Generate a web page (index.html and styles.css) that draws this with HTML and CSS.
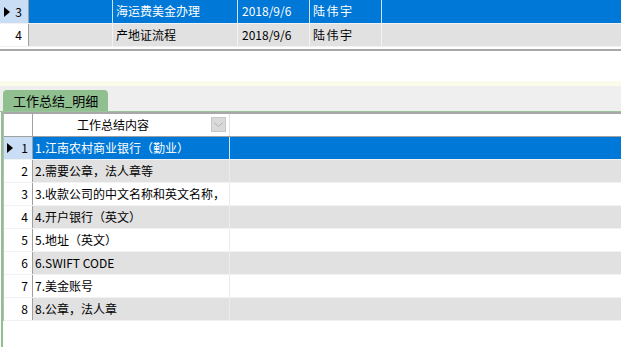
FILE: index.html
```html
<!DOCTYPE html>
<html>
<head>
<meta charset="utf-8">
<link rel="stylesheet" href="styles.css">
</head>
<body>
<div class="top-grid">
  <div class="row sel">
    <div class="rh"><span class="arrow"></span><span>3</span></div>
    <div class="c c1"></div>
    <div class="c c2">海运费美金办理</div>
    <div class="c c3">2018/9/6</div>
    <div class="c c4">陆伟宇</div>
    <div class="c rest"></div>
  </div>
  <div class="row alt">
    <div class="rh"><span>4</span></div>
    <div class="c c1"></div>
    <div class="c c2">产地证流程</div>
    <div class="c c3">2018/9/6</div>
    <div class="c c4">陆伟宇</div>
    <div class="c rest"></div>
  </div>
</div>
<div class="gap"></div>
<div class="band"></div>
<div class="tabs">
  <div class="tab">工作总结_明细</div>
</div>
<div class="panel">
  <div class="grid">
    <div class="hrow">
      <div class="hrh"></div>
      <div class="hc">
        <span class="htext">工作总结内容</span>
        <span class="dd"><svg width="11" height="7" viewBox="0 0 11 7"><path d="M1 1.5 L5.5 5.5 L10 1.5" fill="none" stroke="#b4b4b4" stroke-width="1"/></svg></span>
      </div>
      <div class="hrest"></div>
    </div>
    <div class="brow sel">
      <div class="brh"><span class="arrow"></span><span>1</span></div>
      <div class="bc">1.江南农村商业银行（勤业）</div>
      <div class="bc rest"></div>
    </div>
    <div class="brow alt">
      <div class="brh"><span>2</span></div>
      <div class="bc">2.需要公章，法人章等</div>
      <div class="bc rest"></div>
    </div>
    <div class="brow">
      <div class="brh"><span>3</span></div>
      <div class="bc">3.收款公司的中文名称和英文名称，</div>
      <div class="bc rest"></div>
    </div>
    <div class="brow alt">
      <div class="brh"><span>4</span></div>
      <div class="bc">4.开户银行（英文）</div>
      <div class="bc rest"></div>
    </div>
    <div class="brow">
      <div class="brh"><span>5</span></div>
      <div class="bc">5.地址（英文）</div>
      <div class="bc rest"></div>
    </div>
    <div class="brow alt">
      <div class="brh"><span>6</span></div>
      <div class="bc">6.SWIFT CODE</div>
      <div class="bc rest"></div>
    </div>
    <div class="brow">
      <div class="brh"><span>7</span></div>
      <div class="bc">7.美金账号</div>
      <div class="bc rest"></div>
    </div>
    <div class="brow alt">
      <div class="brh"><span>8</span></div>
      <div class="bc">8.公章，法人章</div>
      <div class="bc rest"></div>
    </div>
  </div>
</div>
</body>
</html>
```
FILE: styles.css
```css
html, body {
  margin: 0;
  padding: 0;
}
body {
  width: 621px;
  height: 347px;
  overflow: hidden;
  background: #ffffff;
  font-family: "Noto Sans CJK SC", "Liberation Sans", sans-serif;
  font-size: 12px;
  color: #000;
}

/* top grid */
.top-grid {
  height: 49px;
  border-bottom: 2px solid #a8a8a8;
}
.row {
  display: flex;
  height: 23px;
  border-bottom: 1px solid #f2f2f2;
  box-sizing: border-box;
  line-height: 22px;
}
.row.sel { background: #0078d7; color: #fff; height: 24px; }
.row.alt { background: #e1e1e1; }
.rh {
  width: 29px;
  flex: none;
  box-sizing: border-box;
  border-right: 1px solid #a0a0a0;
  background: #fff;
  color: #000;
  display: flex;
  align-items: center;
  justify-content: flex-end;
  padding-right: 6px;
  gap: 5px;
}
.row.sel .rh { background: #c9def5; }
.c {
  flex: none;
  box-sizing: border-box;
  border-right: 1px solid #f2f2f2;
  white-space: nowrap;
  overflow: hidden;
}
.row.sel .c { border-right-color: #cfe3f7; }
.c1 { width: 84px; }
.c2 { width: 125px; padding-left: 3px; }
.c3 { width: 72px; padding-left: 4px; }
.c4 { width: 72px; padding-left: 3px; letter-spacing: 1.5px; }
.rest { flex: 1; border-right: none; }

.arrow {
  width: 0;
  height: 0;
  border-top: 5px solid transparent;
  border-bottom: 5px solid transparent;
  border-left: 6px solid #000;
}

.gap { height: 30px; }
.band { height: 5px; background: #fbfbea; }

.tabs {
  height: 25px;
  background: #efefef;
  display: flex;
  align-items: flex-end;
  padding-left: 3px;
  border-bottom: 1px solid #9cc49c;
}
.tab {
  height: 21px;
  width: 105px;
  background: #90c090;
  border-radius: 4px 4px 0 0;
  box-sizing: border-box;
  padding-left: 10px;
  line-height: 22px;
  font-size: 13px;
}

/* bottom panel */
.panel {
  margin-left: 1px;
  border-left: 2px solid #90c090;
  height: 236px;
  background: #fff;
}
.grid {
  border-top: 2px solid #a8a8a8;
  border-left: 1px solid #b8b8b8;
}
.hrow {
  display: flex;
  height: 23px;
  border-bottom: 1px solid #a0a0a0;
  box-sizing: border-box;
  background: #fff;
  line-height: 22px;
}
.hrh {
  width: 29px;
  flex: none;
  box-sizing: border-box;
  border-right: 1px solid #a0a0a0;
}
.hc {
  width: 197px;
  flex: none;
  box-sizing: border-box;
  border-right: 1px solid #e4e4e4;
  display: flex;
  align-items: center;
  position: relative;
}
.htext { padding-left: 44px; }
.dd {
  position: absolute;
  left: 178px;
  top: 3px;
  width: 15px;
  height: 15px;
  box-sizing: border-box;
  background: #dadada;
  border: 1px solid #c8c8c8;
  display: flex;
  align-items: center;
  justify-content: center;
}
.hrest { flex: 1; }

.brow {
  display: flex;
  height: 23px;
  border-bottom: 1px solid #f2f2f2;
  box-sizing: border-box;
  line-height: 22px;
}
.brow.sel { background: #0078d7; color: #fff; }
.brow.alt { background: #e1e1e1; }
.brh {
  width: 29px;
  flex: none;
  box-sizing: border-box;
  border-right: 1px solid #a0a0a0;
  background: #fff;
  color: #000;
  display: flex;
  align-items: center;
  justify-content: flex-end;
  padding-right: 4px;
  gap: 8px;
}
.brow.sel .brh { background: #c9def5; }
.bc {
  width: 197px;
  flex: none;
  box-sizing: border-box;
  border-right: 1px solid #ececec;
  padding-left: 2px;
  white-space: nowrap;
  overflow: hidden;
}
.brow.sel .bc { border-right-color: #cfe3f7; }
.bc.rest { flex: 1; width: auto; border-right: none; }
```
